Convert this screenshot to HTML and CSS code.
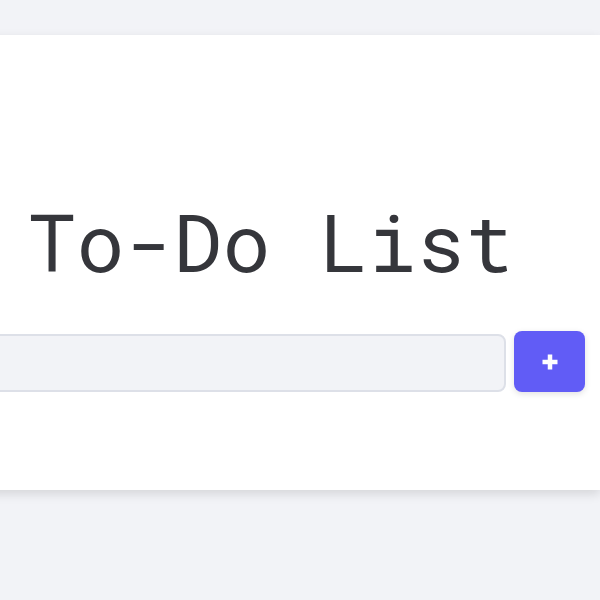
FILE: index.html
```html
<!DOCTYPE html>
<html lang="en">
<head>
<meta charset="utf-8">
<title>To-Do List</title>
<link rel="stylesheet" href="styles.css">
</head>
<body>
<div class="page">
  <main class="card">
    <h1 class="title">To-Do List</h1>
    <form class="add-form" onsubmit="return false">
      <input class="task-input" type="text" aria-label="New task">
      <button class="add-btn" type="submit" aria-label="Add task">
        <svg width="18" height="18" viewBox="0 0 18 18" aria-hidden="true"><path d="M9 1.5v15M1.5 9h15" stroke="#fff" stroke-width="4.5" fill="none"/></svg>
      </button>
    </form>
  </main>
</div>
</body>
</html>
```
FILE: styles.css
```css
html, body {
  margin: 0;
  padding: 0;
  background: #f2f3f7;
  overflow: hidden;
}
.page {
  display: flex;
  justify-content: flex-end;
  padding-top: 35px;
  height: 600px;
  box-sizing: border-box;
}
.card {
  flex: 0 0 658px;
  width: 658px;
  height: 455px;
  box-sizing: border-box;
  background: #ffffff;
  box-shadow: 0 4px 10px rgba(0, 0, 0, 0.12);
  padding: 156px 15px 0 15px;
  display: flex;
  flex-direction: column;
}
.title {
  margin: 0;
  text-align: center;
  font-family: "Roboto Mono", "DejaVu Sans Mono", "Liberation Mono", monospace;
  font-weight: normal;
  font-size: 80px;
  letter-spacing: 0.6px;
  line-height: 100px;
  color: #35363b;
}
.add-form {
  display: flex;
  align-items: flex-start;
  gap: 8px;
  margin-top: 40px;
}
.task-input {
  flex: 1;
  height: 58px;
  margin-top: 3px;
  box-sizing: border-box;
  border: 2px solid #dde0e8;
  border-radius: 8px;
  background: #f2f3f7;
  outline: none;
}
.add-btn {
  width: 71px;
  height: 61px;
  border: none;
  border-radius: 8px;
  background: #615cf6;
  box-shadow: 0 2px 6px rgba(0, 0, 0, 0.12);
  display: flex;
  align-items: center;
  justify-content: center;
  padding: 0;
}
```
